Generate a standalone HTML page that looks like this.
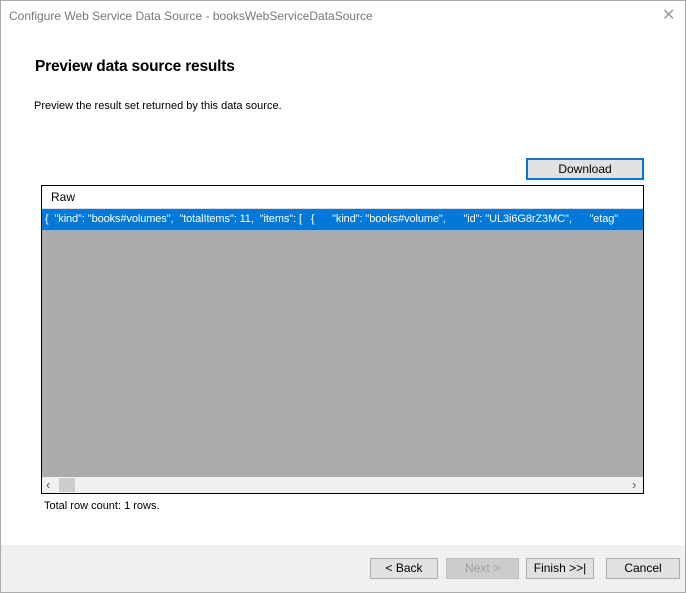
<!DOCTYPE html><html><head><style>
body{margin:0;width:686px;height:593px;position:relative;font-family:"Liberation Sans",sans-serif;background:#fff;overflow:hidden}
.a{position:absolute}
.btn{position:absolute;top:558px;height:19px;border:1px solid #adadad;background:#e1e1e1;font-size:12px;text-align:center;line-height:19px;color:#000}
</style></head><body>
<div class="a" style="left:0;top:0;width:684px;height:591px;border:1px solid #aaa"></div>
<div class="a" style="left:9px;top:9px;font-size:12px;color:#777">Configure Web Service Data Source - booksWebServiceDataSource</div>
<div class="a" style="left:662px;top:5px;font-size:16px;color:#999;font-weight:100">✕</div>
<div class="a" style="left:35px;top:58px;font-size:15.5px;color:#000;font-weight:bold;letter-spacing:-0.2px">Preview data source results</div>
<div class="a" style="left:34px;top:100px;font-size:11px;color:#000">Preview the result set returned by this data source.</div>
<div class="a" style="left:526px;top:158px;width:114px;height:18px;border:2px solid #0078d7;background:#e1e1e1;font-size:12px;text-align:center;line-height:18px">Download</div>
<div class="a" style="left:41px;top:185px;width:601px;height:307px;border:1px solid #000;background:#ababab">
 <div class="a" style="left:0;top:0;width:601px;height:22px;background:#fff;border-bottom:1px solid #ddd;font-size:12px;line-height:22px;text-indent:9px">Raw</div>
 <div class="a" style="left:0;top:23px;width:601px;height:21px;background:#0078d7;color:#fff;font-size:11px;line-height:21px;white-space:pre;overflow:hidden;text-indent:3px;letter-spacing:-0.1px">{  "kind": "books#volumes",  "totalItems": 11,  "items": [   {      "kind": "books#volume",      "id": "UL3i6G8rZ3MC",      "etag"</div>
 <div class="a" style="left:0;top:291px;width:601px;height:16px;background:#f0f0f0;font-size:13px;color:#555;line-height:16px">
  <span class="a" style="left:4px;top:0">‹</span><span class="a" style="left:17px;top:1px;width:16px;height:14px;background:#cdcdcd"></span><span class="a" style="left:590px;top:0">›</span></div>
</div>
<div class="a" style="left:44px;top:500px;font-size:11px">Total row count: 1 rows.</div>
<div class="a" style="left:1px;top:545px;width:684px;height:47px;background:#f0f0f0"></div>
<div class="btn" style="left:370px;width:66px">&lt; Back</div>
<div class="btn" style="left:446px;width:71px;color:#a0a0a0;background:#ccc;border-color:#bfbfbf">Next &gt;</div>
<div class="btn" style="left:526px;width:66px">Finish &gt;&gt;|</div>
<div class="btn" style="left:606px;width:72px">Cancel</div>
</body></html>
